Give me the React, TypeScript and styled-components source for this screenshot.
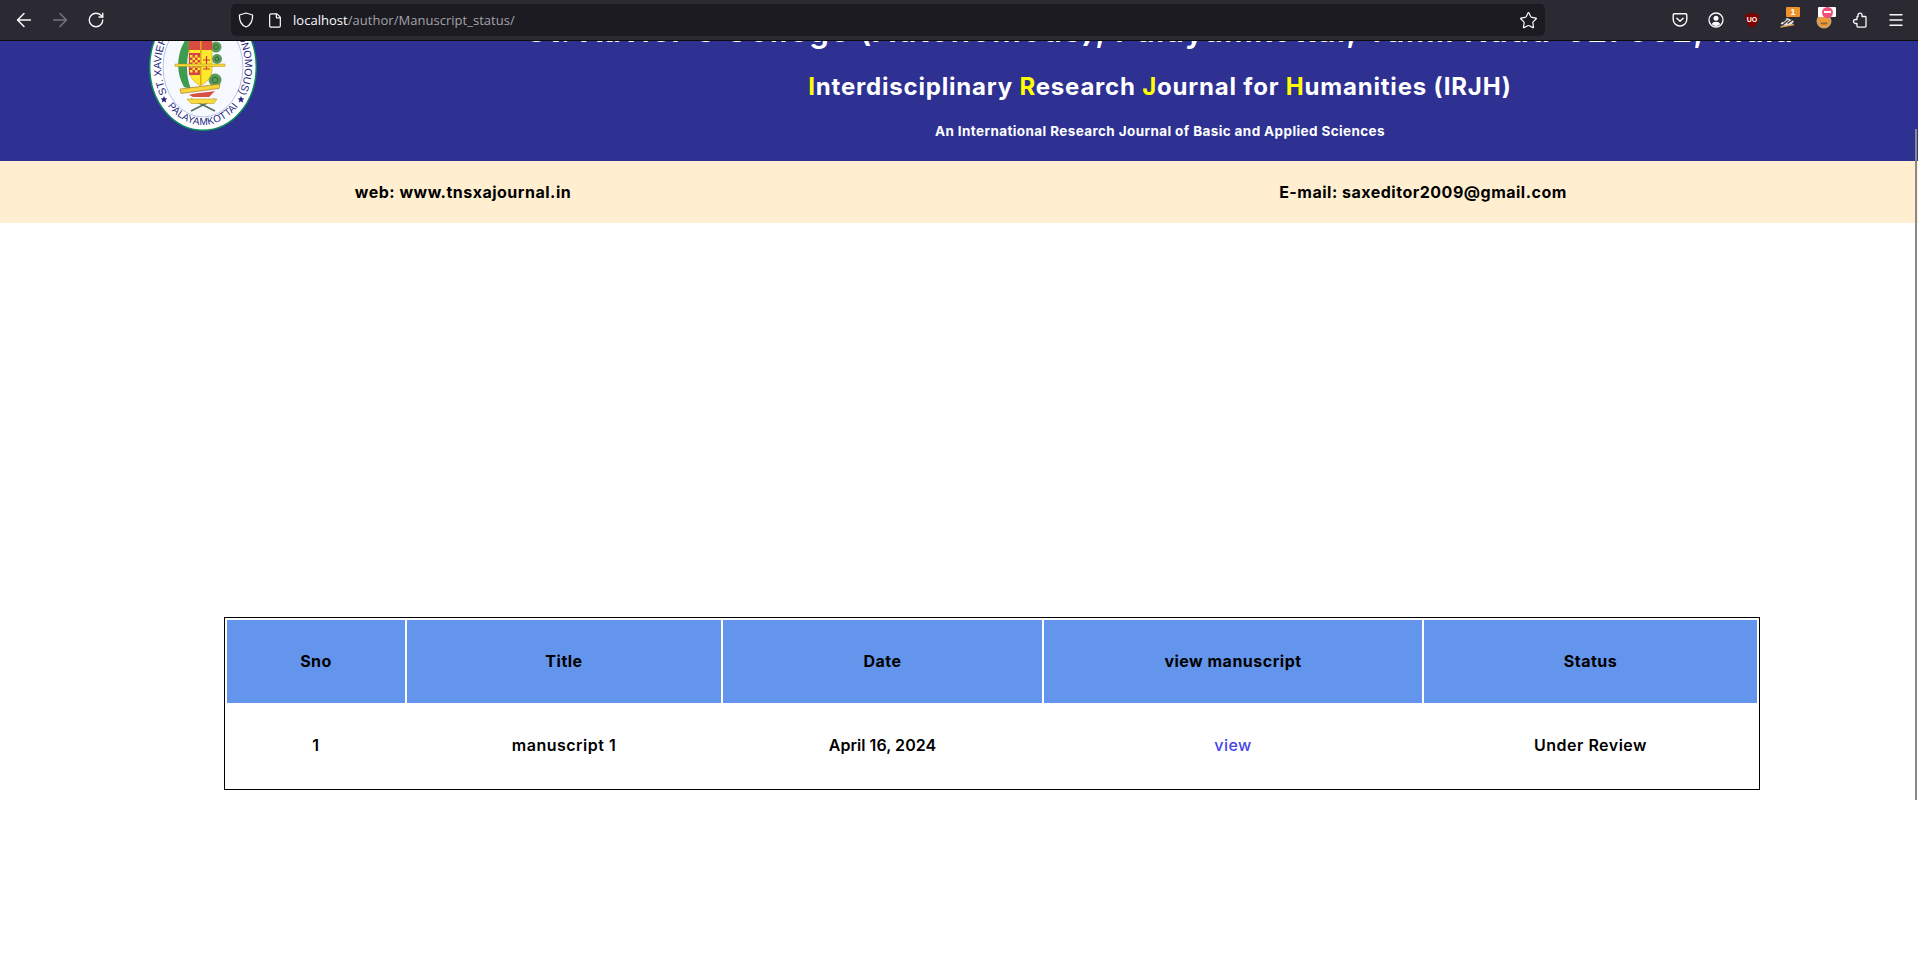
import React from 'react';
import styled, { createGlobalStyle } from 'styled-components';
import { ArrowLeft, ArrowRight, RotateCw, File, Star, Menu } from 'lucide-react';

const GlobalStyle = createGlobalStyle`
    html, body {
        margin: 0;
        height: 100%;
        overflow: hidden;
        background: #fff;
    }

    body {
        font-family: Inter, "Liberation Sans", sans-serif;
        color: #000;
    }
`;

const Page = styled.div`
    height: 973px;
    display: flex;
    flex-direction: column;
`;

const Toolbar = styled.div`
    flex: none;
    height: 40px;
    display: flex;
    align-items: center;
    padding-left: 6px;
    background: #2b2a33;
    border-bottom: 1px solid #0c0c0d;
`;

const ToolButton = styled.div<{ $dim?: boolean }>`
    position: relative;
    flex: none;
    width: 36px;
    height: 32px;
    display: flex;
    align-items: center;
    justify-content: center;
    color: ${({ $dim }) => ($dim ? '#77767c' : '#fbfbfe')};
`;

const UrlBar = styled.div`
    flex: none;
    width: 1314px;
    height: 32px;
    margin: 0 117px;
    padding: 0 7px;
    box-sizing: border-box;
    display: flex;
    align-items: center;
    background: #1c1b22;
    border-radius: 5px;
    color: #fbfbfe;
`;

const UrlIcon = styled.span`
    flex: none;
    width: 16px;
    height: 16px;
    margin-right: 13px;
    display: flex;
    align-items: center;
    justify-content: center;
`;

const UrlText = styled.div`
    flex: 1;
    margin-left: -3px;
    font-family: "Open Sans", sans-serif;
    font-size: 13px;
    letter-spacing: 0.03px;
    color: #a3a3a8;
    white-space: nowrap;
`;

const UrlHost = styled.span`
    color: #fbfbfe;
`;

const CountBadge = styled.span`
    position: absolute;
    top: 3px;
    left: 16px;
    width: 14px;
    height: 10px;
    border-radius: 1px;
    background: #ec9329;
    color: #fff;
    font: 700 9px/10px "Liberation Sans", sans-serif;
    text-align: center;
`;

const BlockBadge = styled.span`
    position: absolute;
    top: 3px;
    left: 12px;
    width: 18px;
    height: 10px;
    border-radius: 1px;
    background: #fff;
    display: flex;
    align-items: center;
    justify-content: center;

    &::after {
        content: '';
        width: 11px;
        height: 11px;
        border-radius: 50%;
        background: linear-gradient(#fff, #fff) center / 7px 2px no-repeat, #f0507c;
    }
`;

const Viewport = styled.div`
    position: relative;
    flex: 1;
    overflow: hidden;
`;

const ScrollThumb = styled.div`
    position: absolute;
    top: 88px;
    right: 1px;
    width: 2px;
    height: 671px;
    background: #8a8a8a;
`;

const Banner = styled.header`
    margin-top: -38px;
    height: 158px;
    display: grid;
    grid-template-columns: 406px 1fr;
    padding-right: 4px;
    background: #2e3192;
    color: #fff;
    overflow: hidden;
`;

const LogoCell = styled.div`
    display: flex;
    justify-content: center;
`;

const Heading = styled.div`
    display: flex;
    flex-direction: column;
    align-items: center;
    white-space: nowrap;
`;

const CollegeName = styled.h1`
    margin: 9px 0 0;
    font-size: 32px;
    line-height: 38px;
    font-weight: 600;
    letter-spacing: 1.16px;
`;

const JournalName = styled.h2`
    margin: 19px 0 0;
    font-size: 24px;
    line-height: 36px;
    font-weight: 700;
    letter-spacing: 0.8px;
`;

const Initial = styled.span`
    color: #ffff00;
`;

const Tagline = styled.p`
    margin: 17px 0 0;
    font-size: 13.5px;
    line-height: 18px;
    font-weight: 700;
    letter-spacing: 0.39px;
`;

const ContactStrip = styled.div`
    height: 62px;
    box-sizing: border-box;
    padding-right: 32px;
    display: grid;
    grid-template-columns: 1fr 1fr;
    column-gap: 34px;
    align-items: center;
    text-align: center;
    background: #ffefd0;
    font-size: 16px;
    font-weight: 700;
    letter-spacing: 0.5px;
`;

const StatusTable = styled.table`
    margin: 394px 0 0 224px;
    width: 1536px;
    table-layout: fixed;
    border: 1px solid #000;
    border-collapse: separate;
    border-spacing: 2px;
    text-align: center;
    font-size: 16px;
    letter-spacing: 0.5px;
`;

const HeadCell = styled.th`
    height: 83px;
    padding: 0 0 2px;
    box-sizing: border-box;
    background: #6495ed;
    font-weight: 700;
`;

const BodyCell = styled.td<{ $tight?: boolean }>`
    height: 82px;
    padding: 0 0 2px;
    box-sizing: border-box;
    font-weight: 600;
    letter-spacing: ${({ $tight }) => ($tight ? '0.05px' : 'inherit')};
`;

const ViewLink = styled.a`
    color: #4545e6;
    font-weight: 500;
    text-decoration: none;
`;

const ShieldIcon = () => (
    <svg width="16" height="16" viewBox="0 0 16 16" fill="none" stroke="currentColor" strokeWidth="1.3" strokeLinejoin="round">
        <path d="M8 1 14.600 3C14.800 9 12.500 13.200 8 15 3.500 13.200 1.200 9 1.400 3z" />
    </svg>
);

const PuzzleIcon = () => (
    <svg width="16" height="16" viewBox="0 0 16 16" fill="none" stroke="currentColor" strokeWidth="1.3" strokeLinejoin="round">
        <path d="M8 1.200a2 2 0 0 1 2 2v1.300h3.200c.5 0 .8.400.8.800v9c0 .500-.300.800-.800.800H5.800c-.500 0-.800-.300-.800-.800v-2.800H3.500a2 2 0 0 1 0-4H5V5.300c0-.400.300-.800.800-.800H6V3.200a2 2 0 0 1 2-2z" />
    </svg>
);

const PocketIcon = () => (
    <svg width="16" height="16" viewBox="0 0 16 16" fill="none" stroke="currentColor" strokeWidth="1.4">
        <path d="M2.400 1.800h11.200c.700 0 1.200.500 1.200 1.200v4.200a6.800 6.800 0 0 1-13.600 0V3c0-.700.500-1.200 1.200-1.200z" />
        <path d="M4.900 6.200 8 9.200l3.100-3" strokeLinecap="round" strokeLinejoin="round" />
    </svg>
);

const AccountIcon = () => (
    <svg width="16" height="16" viewBox="0 0 16 16" fill="none">
        <circle cx="8" cy="8" r="7" stroke="currentColor" strokeWidth="1.3" />
        <circle cx="8" cy="6.200" r="2.500" fill="currentColor" />
        <path d="M3.800 12.200c.700-1.800 2.300-2.500 4.200-2.500s3.500.700 4.200 2.500A6 6 0 0 1 8 14a6 6 0 0 1-4.200-1.800z" fill="currentColor" />
    </svg>
);

const UBlockIcon = () => (
    <svg width="16" height="16" viewBox="0 0 16 16">
        <path d="M8 .400c2 1.200 4 1.700 6.800 1.800.200 6.400-1.600 10.900-6.800 13.500C2.800 13.100 1 8.600 1.200 2.200 4 2.100 6 1.600 8 .400z" fill="#800000" />
        <text x="8" y="10" textAnchor="middle" fontFamily="Liberation Sans, sans-serif" fontSize="7" fontWeight="700" fill="#fff">UO</text>
    </svg>
);

const PenExtensionIcon = () => (
    <svg width="18" height="18" viewBox="0 0 18 18" fill="none">
        <path d="M1.500 12.500 8 7l7 3-3.500 5H5z" fill="#e9e7e2" />
        <path d="M2 15.500 9.500 9M8.500 12.500l5-3.500M4 11l3-3" stroke="#3b3a40" strokeWidth="1.300" />
        <path d="M1.500 16 15 13.500" stroke="#d9a15c" strokeWidth="1.500" />
    </svg>
);

const FaceExtensionIcon = () => (
    <svg width="18" height="18" viewBox="0 0 18 18">
        <circle cx="9" cy="10" r="7.500" fill="#c8a06c" />
        <circle cx="9" cy="10.500" r="5.500" fill="#ee9a3a" />
        <path d="M5 11.500h8l-1.500 2h-5z" fill="#8a6a3c" />
    </svg>
);

const SealLogo = () => (
    <svg width="108" height="128" viewBox="0 0 108 128">
        <defs>
            <path id="sealUpper" d="M18 90A42 52 0 1 1 90 90" />
            <path id="sealLower" d="M9.300 85A48 58 0 0 0 98.700 85" />
        </defs>
        <ellipse cx="54" cy="64" rx="53.300" ry="63.300" fill="#fff" stroke="#0c8a5a" strokeWidth="1.500" />
        <ellipse cx="54" cy="64" rx="40" ry="50" fill="#f6f9ff" stroke="#a9aee0" strokeWidth="0.800" />
        <text fontFamily="Liberation Sans, sans-serif" fontSize="10.500" fill="#23277f">
            <textPath href="#sealUpper" startOffset="50%" textAnchor="middle">ST. XAVIER'S COLLEGE (AUTONOMOUS)</textPath>
        </text>
        <text fontFamily="Liberation Sans, sans-serif" fontSize="10" letterSpacing="0.2" fill="#23277f">
            <textPath href="#sealLower" startOffset="50%" textAnchor="middle">PALAYAMKOTTAI</textPath>
        </text>
        <path d="M15 93l1 2.300 2.400.200-1.800 1.600.600 2.400-2.200-1.300-2.200 1.300.600-2.400-1.800-1.600 2.400-.200zM92 93l1 2.300 2.400.200-1.800 1.600.600 2.400-2.200-1.300-2.200 1.300.600-2.400-1.800-1.600 2.400-.200z" fill="#23277f" />
        <path d="M37 36c-9 13-11 33-2 48l7 2c-6-14-5-34 1-48z" fill="#3f9c4e" />
        <circle cx="67" cy="44" r="5.500" fill="#5b9a58" />
        <circle cx="68" cy="56" r="5" fill="#5b9a58" />
        <circle cx="66" cy="77" r="6.500" fill="#5b9a58" />
        <circle cx="67" cy="44" r="2.300" fill="none" stroke="#2d6a3a" />
        <circle cx="68" cy="56" r="2" fill="none" stroke="#2d6a3a" />
        <circle cx="66" cy="77" r="2.800" fill="none" stroke="#2d6a3a" />
        <path d="M42 108 66 96M66 108 42 96" stroke="#50705a" strokeWidth="1.600" />
        <path d="M40 38h23v28c0 8-5 13-11.500 17C45 79 40 74 40 66z" fill="#ffe92c" stroke="#d49a1d" strokeWidth="0.600" />
        <path d="M40 38h23v9H40z" fill="#d84a42" />
        <path d="M40 50h11v22H40z" fill="#d8404a" />
        <path d="M41 52h2.500v2.500H41zM46 52h2.500v2.500H46zM43.500 54.500H46V57h-2.500zM48.500 54.500H51V57h-2.500zM41 57h2.500v2.500H41zM46 57h2.500v2.500H46zM43.500 59.500H46V62h-2.500zM48.500 59.500H51V62h-2.500zM41 62h2.500v2.500H41zM46 62h2.500v2.500H46zM43.500 64.500H46V67h-2.500zM48.500 64.500H51V67h-2.500zM41 67h2.500v2.500H41zM46 67h2.500v2.500H46z" fill="#ffe92c" />
        <path d="M51 38h1.500v44H51z" fill="#e0a51f" />
        <path d="M54 57h7M57.500 53v13M54 66h7" stroke="#c8343a" strokeWidth="1.200" />
        <path d="M26 61h50v2.500H26z" fill="#f5d83a" stroke="#b68a1d" strokeWidth="0.500" />
        <path d="M31 86 71 81l-1 4.500-38 5z" fill="#f6d33a" stroke="#9c6a1a" strokeWidth="0.600" />
        <path d="M40 92c8-3 18-2 26-4l-6 6H44z" fill="#d8503f" />
        <path d="M38 96h30l-3 4.500H42z" fill="#f8dc3f" stroke="#b68a1d" strokeWidth="0.500" />
    </svg>
);

const journalWords = [
    ['I', 'nterdisciplinary '],
    ['R', 'esearch '],
    ['J', 'ournal for '],
    ['H', 'umanities (IRJH)'],
];

const columns = [
    { title: 'Sno', width: 178 },
    { title: 'Title', width: 314 },
    { title: 'Date', width: 319 },
    { title: 'view manuscript', width: 378 },
    { title: 'Status', width: 333 },
];

const App: React.FC = () => (
    <Page>
        <GlobalStyle />
        <Toolbar>
            <ToolButton><ArrowLeft size={22} strokeWidth={1.6} /></ToolButton>
            <ToolButton $dim><ArrowRight size={22} strokeWidth={1.6} /></ToolButton>
            <ToolButton><RotateCw size={18} strokeWidth={1.8} /></ToolButton>
            <UrlBar>
                <UrlIcon><ShieldIcon /></UrlIcon>
                <UrlIcon><File size={17} strokeWidth={1.8} /></UrlIcon>
                <UrlText><UrlHost>localhost</UrlHost>/author/Manuscript_status/</UrlText>
                <Star size={19} strokeWidth={1.5} />
            </UrlBar>
            <ToolButton><PocketIcon /></ToolButton>
            <ToolButton><AccountIcon /></ToolButton>
            <ToolButton><UBlockIcon /></ToolButton>
            <ToolButton><PenExtensionIcon /><CountBadge>1</CountBadge></ToolButton>
            <ToolButton><FaceExtensionIcon /><BlockBadge /></ToolButton>
            <ToolButton><PuzzleIcon /></ToolButton>
            <ToolButton><Menu size={18} strokeWidth={2} /></ToolButton>
        </Toolbar>
        <Viewport>
            <Banner>
                <LogoCell><SealLogo /></LogoCell>
                <Heading>
                    <CollegeName>St. Xavier's College (Autonomous), Palayamkottai, Tamil Nadu-627002, India</CollegeName>
                    <JournalName>
                        {journalWords.map(([first, rest]) => (
                            <React.Fragment key={first}><Initial>{first}</Initial>{rest}</React.Fragment>
                        ))}
                    </JournalName>
                    <Tagline>An International Research Journal of Basic and Applied Sciences</Tagline>
                </Heading>
            </Banner>
            <ContactStrip>
                <span>web: www.tnsxajournal.in</span>
                <span>E-mail: saxeditor2009@gmail.com</span>
            </ContactStrip>
            <StatusTable>
                <colgroup>
                    {columns.map((col) => <col key={col.title} width={col.width} />)}
                </colgroup>
                <thead>
                    <tr>
                        {columns.map((col) => <HeadCell key={col.title}>{col.title}</HeadCell>)}
                    </tr>
                </thead>
                <tbody>
                    <tr>
                        <BodyCell>1</BodyCell>
                        <BodyCell>manuscript 1</BodyCell>
                        <BodyCell $tight>April 16, 2024</BodyCell>
                        <BodyCell><ViewLink href="#">view</ViewLink></BodyCell>
                        <BodyCell>Under Review</BodyCell>
                    </tr>
                </tbody>
            </StatusTable>
            <ScrollThumb />
        </Viewport>
    </Page>
);

export default App;
